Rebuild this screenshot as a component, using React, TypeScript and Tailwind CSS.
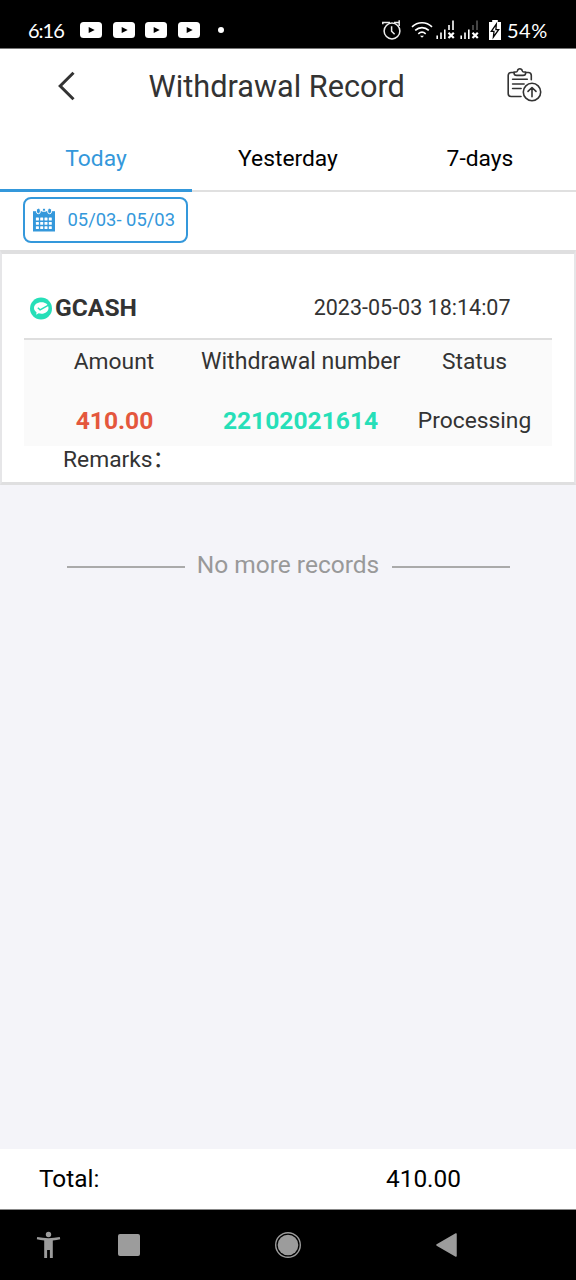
import React from 'react';

const tabs = [
  { label: 'Today', active: true },
  { label: 'Yesterday', active: false },
  { label: '7-days', active: false },
];

const VideoIcon: React.FC = () => (
  <svg width="22" height="16" viewBox="0 0 22 16">
    <rect width="22" height="16" rx="3.5" fill="#fff" />
    <path d="M8.7 5v6l6-3z" fill="#000" />
  </svg>
);

const AlarmIcon: React.FC = () => (
  <svg width="20" height="20" viewBox="0 0 20 20" fill="none" stroke="#eee" strokeWidth="1.5">
    <circle cx="11" cy="11" r="7.9" />
    <path d="M10.600 6.200v5l3 3M1.800 4.200V2.400H9M13 2.600h5.200V.2M18.200 1.500v4.500" />
  </svg>
);

const WifiIcon: React.FC = () => (
  <svg width="22" height="18" viewBox="0 0 22 18" fill="none" stroke="#fff" strokeWidth="1.6">
    <path d="M1 5.8C6.6.4 15.4.4 21 5.800M4.200 9.400c3.900-3.700 9.700-3.700 13.600 0M7.300 12.800c2.200-2 5.200-2 7.400 0" />
    <path d="M9 14.700h4l-2 2z" fill="#fff" stroke="none" />
  </svg>
);

const SignalIcon: React.FC<{ last: string }> = ({ last }) => (
  <svg width="19" height="20" viewBox="0 0 19 20" fill="none" stroke="#fff" strokeWidth="1.6">
    <path d="M1.2 15.500V19M5 12.500V19M8.800 9.500V19" />
    <path d="M13 5v5M17 .5V10" stroke={last} />
    <path d="M12.500 12.700l5.300 5.300M17.800 12.700l-5.300 5.300" strokeWidth="2.200" />
  </svg>
);

const BatteryIcon: React.FC = () => (
  <svg width="12" height="20" viewBox="0 0 12 20">
    <path d="M3.200 0h5.600v2H12v18H0V2h3.200z" fill="#fff" />
    <path d="M7.300 4.200L2.300 11.400h2.700L4.400 17l5.300-7.400H6.900z" fill="#fff" stroke="#000" strokeWidth="1.300" />
  </svg>
);

const RecordIcon: React.FC = () => (
  <svg width="35" height="36" viewBox="0 0 35 36" fill="none" stroke="#333" strokeWidth="1.600" strokeLinecap="round" strokeLinejoin="round">
    <path d="M6.500 5.500H4.200c-1.800 0-3 1.200-3 3v18c0 1.800 1.200 3 3 3H14M19.500 5.500h1.800c1.800 0 3 1.200 3 3v4.300" />
    <path d="M7 5h2c.8 0 1.200-.4 1.400-1.100.6-2.900 4.300-2.900 4.900 0 .2.700.6 1.100 1.400 1.100h2v.7c0 1.700-1 2.700-2.700 2.700H9.700C8 8.400 7 7.400 7 5.700z" />
    <path d="M5.600 12.300h14.700M5.600 17h11.500M5.600 21.500h8.500" />
    <circle cx="25" cy="25" r="8.700" />
    <path d="M25 29.800V20.500M21 24.400l4-3.900 4 3.900" />
  </svg>
);

const CalendarIcon: React.FC = () => (
  <svg width="22" height="24" viewBox="0 0 22 24">
    <path d="M0 3.200h22V23.500H0z" fill="#3498db" />
    <g fill="#3498db" stroke="#fff" strokeWidth="1">
      <rect x="3.500" y=".2" width="3.800" height="5.500" rx="1.900" />
      <rect x="14.700" y=".2" width="3.800" height="5.500" rx="1.900" />
      <path d="M9.200 3.200c0-4 3.600-4 3.600 0z" />
    </g>
    {[9.600, 13.900, 18.200].map((y) =>
      [2.900, 7.200, 11.500, 15.800].map((x) => (
        <rect key={`${x}-${y}`} x={x} y={y} width="3" height="2.900" rx=".5" fill="#fff" />
      ))
    )}
  </svg>
);

const GcashIcon: React.FC = () => (
  <svg width="22" height="23" viewBox="0 0 22 23">
    <circle cx="11" cy="11.500" r="11" fill="#26dfb8" />
    <path d="M11.500 5.300c4.200 0 7 2.400 7 5.600s-3 5.800-7 5.800c-1 0-2-.1-2.800-.4l-2.500 1.400.3-2.500C4.800 14.200 4 12.700 4 11c0-3.300 3.200-5.700 7.500-5.700z" fill="#fff" />
    <path d="M7.800 10.800l2.300 2 8-4.500" fill="none" stroke="#26dfb8" strokeWidth="1.500" />
  </svg>
);

const StatusBar: React.FC = () => (
  <div className="flex h-[49px] items-center border-b border-[#777] bg-black pt-3 pl-7 pr-7 font-['Lato'] text-[20px] text-white">
    <span className="w-[52px] tracking-[-1px]">6:16</span>
    <div className="flex gap-[10.5px]">
      <VideoIcon />
      <VideoIcon />
      <VideoIcon />
      <VideoIcon />
    </div>
    <div className="ml-[18px] h-1.5 w-1.5 rounded-full bg-white" />
    <div className="ml-auto flex items-center">
      <AlarmIcon />
      <div className="ml-[10px] flex"><WifiIcon /></div>
      <div className="ml-[3px] flex gap-[5px]">
        <SignalIcon last="#fff" />
        <SignalIcon last="#555" />
      </div>
      <div className="ml-[10px] flex"><BatteryIcon /></div>
      <span className="ml-1.5 w-[41px] whitespace-nowrap tracking-[0.5px]">54%</span>
    </div>
  </div>
);

const Header: React.FC = () => (
  <header className="flex h-[77px] items-center bg-white pb-[3px] pl-[57px] pr-[34px]">
    <svg width="19" height="30" viewBox="0 0 19 30" fill="none" stroke="#333" strokeWidth="3">
      <path d="M16.500 1.800L3.200 15l13.300 13.200" />
    </svg>
    <h1 className="ml-[72.500px] pt-0.5 text-[30.700px] leading-none text-[#333]">Withdrawal Record</h1>
    <div className="ml-auto pb-0.5"><RecordIcon /></div>
  </header>
);

const App: React.FC = () => {
  return (
    <div className="flex h-[1280px] w-[576px] flex-col overflow-hidden bg-[#f4f4f9] font-['Roboto','Noto_Sans_CJK_SC',sans-serif] text-[22.800px] text-[#333]">
      <StatusBar />
      <Header />
      <nav className="grid h-[66px] grid-cols-3 bg-white">
        {tabs.map((tab) => (
          <div
            key={tab.label}
            className={
              tab.active
                ? 'flex items-center justify-center border-b-3 border-[#3498db] pt-[3px] text-[#3498db]'
                : 'flex items-center justify-center border-b-2 border-[#e0e0e0] pt-0.5 text-black'
            }
          >
            {tab.label}
          </div>
        ))}
      </nav>
      <div className="h-[58px] bg-white pt-[5px] pl-[23px]">
        <div className="flex h-[46px] w-[165px] items-center rounded-[8px] border-2 border-[#3498db] pl-2 text-[18.400px] text-[#3498db]">
          <CalendarIcon />
          <span className="ml-[12.500px] whitespace-nowrap">05/03- 05/03</span>
        </div>
      </div>

      <section className="h-[235px] border-x-2 border-t-4 border-b-3 border-x-[#e6e6e8] border-y-[#dfdfe0] bg-white px-[22px]">
        <div className="flex h-[84px] items-center pt-6 pl-1.5">
          <GcashIcon />
          <span className="ml-[3px] text-[24.600px] font-bold">GCASH</span>
          <span className="ml-auto mr-[41.500px] pt-px text-[21.500px]">2023-05-03 18:14:07</span>
        </div>
        <div className="grid h-[108px] grid-cols-[177px_199px_152px] grid-rows-[44px_62px] items-center border-t-2 border-[#dedede] bg-[#fafafa] text-center whitespace-nowrap">
          <span className="pl-[3px]">Amount</span>
          <span className="text-[23.100px]">Withdrawal number</span>
          <span className="pr-[3px]">Status</span>
          <span className="pt-3 pl-[4px] text-[24.600px] font-bold text-[#e4573d]">410.00</span>
          <span className="pt-3 text-[24.600px] font-bold text-[#26dfb8]">22102021614</span>
          <span className="pt-3 pr-[3px]">Processing</span>
        </div>
        <p className="pl-[39px] leading-[27px]" lang="zh-CN">Remarks：</p>
      </section>

      <div className="flex h-[160px] items-center justify-center">
        <div className="mt-[3px] h-0.5 w-[118px] bg-[#aaa]" />
        <span className="w-[207px] text-center text-[24.500px] text-[#999]">No more records</span>
        <div className="mt-[3px] h-0.5 w-[118px] bg-[#aaa]" />
      </div>

      <footer className="mt-auto flex h-[61px] items-center border-b border-[#888] bg-white pl-[39px] text-[24.400px] text-black">
        <span className="w-[347px]">Total:</span>
        <span>410.00</span>
      </footer>
      <div className="flex h-[70px] items-center bg-black pl-9">
        <svg width="25" height="28" viewBox="0 0 25 28" fill="#9c9c9c">
          <circle cx="12.500" cy="3.500" r="2.700" />
          <path d="M1.200 6c7.500 1.500 15 1.500 22.600 0l.4 2.200c-2.400.6-4.900 1-7.400 1.200V27h-2.900v-8h-2.800v8H8.200V9.400C5.700 9.200 3.200 8.800.8 8.200z" />
        </svg>
        <div className="ml-[57px] h-[22px] w-[22px] rounded-[2px] bg-[#9c9c9c]" />
        <svg className="ml-[135px]" width="26" height="26" viewBox="0 0 26 26">
          <circle cx="13" cy="13" r="12.300" fill="none" stroke="#9c9c9c" strokeWidth="1.400" />
          <circle cx="13" cy="13" r="10.300" fill="#9c9c9c" />
        </svg>
        <svg className="ml-[135px]" width="21" height="24" viewBox="0 0 21 24">
          <path d="M20 1v22L1 12z" fill="#9c9c9c" stroke="#9c9c9c" strokeWidth="1.500" strokeLinejoin="round" />
        </svg>
      </div>
    </div>
  );
};

export default App;
